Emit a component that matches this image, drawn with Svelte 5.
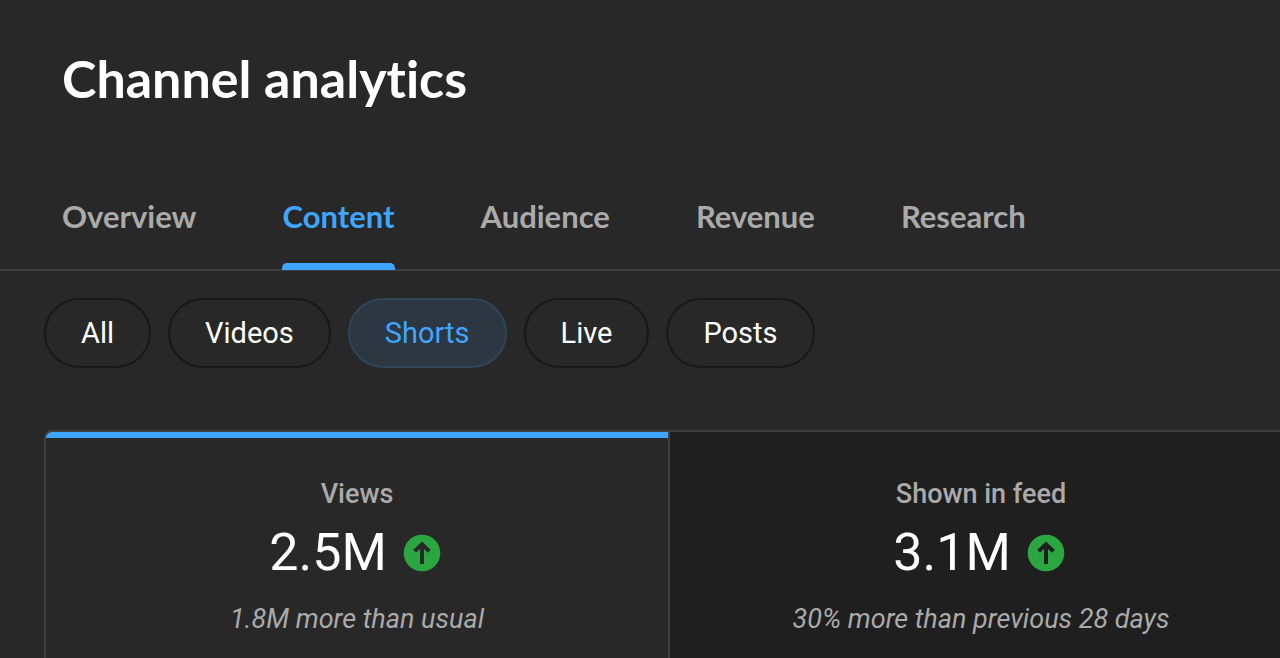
<script>
	const tabs = ['Overview', 'Content', 'Audience', 'Revenue', 'Research'];
	const filters = ['All', 'Videos', 'Shorts', 'Live', 'Posts'];
	const cards = [
		{ title: 'Views', value: '2.5M', note: '1.8M more than usual' },
		{ title: 'Shown in feed', value: '3.1M', note: '30% more than previous 28 days' }
	];

	let activeTab = 'Content';
	let activeFilter = 'Shorts';
	let activeCard = 'Views';
</script>

<main>
	<h1>Channel analytics</h1>

	<nav>
		{#each tabs as tab}
			<button class:active={tab === activeTab} on:click={() => { activeTab = tab; }}>{tab}</button>
		{/each}
	</nav>

	<div class="filters">
		{#each filters as filter}
			<button class:active={filter === activeFilter} on:click={() => { activeFilter = filter; }}>{filter}</button>
		{/each}
	</div>

	<div class="cards">
		{#each cards as card}
			<button class:active={card.title === activeCard} on:click={() => { activeCard = card.title; }}>
				<span class="title">{card.title}</span>
				<span class="value">
					<span>{card.value}</span>
					<svg viewBox="0 0 38 38" aria-hidden="true">
						<circle cx="19" cy="19" r="18.3" />
						<path d="M19 30V10.5M11.6 17.2l7.4-7 7.4 7" />
					</svg>
				</span>
				<span class="note">{card.note}</span>
			</button>
		{/each}
	</div>
</main>

<style>
	:global(body) {
		background: #282828;
	}
	main {
		min-height: 100vh;
		overflow: hidden;
		color: #fff;
		font-family: Roboto, sans-serif;
	}
	button {
		margin: 0;
		font-family: inherit;
		color: inherit;
		background: none;
		border: none;
		cursor: pointer;
	}
	h1 {
		margin: 46px 62px 0;
		font-family: Lato, sans-serif;
		font-size: 52px;
		line-height: 64px;
		font-weight: 700;
		font-variant-ligatures: none;
	}

	nav {
		display: flex;
		gap: 86px;
		margin-top: 56px;
		padding-left: 62px;
		border-bottom: 2px solid #3f3f3f;
	}
	nav button {
		position: relative;
		padding: 31px 0 33px;
		font-family: Lato, sans-serif;
		font-size: 31px;
		line-height: 39px;
		font-weight: 700;
		color: #aaa;
	}
	nav .active {
		color: #3ea6ff;
	}
	nav .active::after {
		content: '';
		position: absolute;
		left: 0;
		right: 0;
		bottom: -1px;
		height: 7px;
		background: #3ea6ff;
		border-radius: 5px 5px 0 0;
	}

	.filters {
		display: flex;
		gap: 17px;
		padding: 27px 44px 0;
	}
	.filters button {
		padding: 16px 35px;
		border: 2px solid #181818;
		border-radius: 35px;
		font-size: 29px;
		line-height: 34px;
	}
	.filters .active {
		color: #3ea6ff;
		background: #2d3741;
		border-color: #2f455a;
	}

	/* the row runs on past the right edge */
	.cards {
		display: flex;
		margin: 62px -12px 0 44px;
	}
	.cards button {
		position: relative;
		flex: 1 1 0;
		display: flex;
		flex-direction: column;
		align-items: center;
		padding: 46px 0 32px;
		overflow: hidden;
		background: #1f1f1f;
		border-top: 2px solid #3f3f3f;
	}
	.cards .active {
		background: #282828;
		border-left: 2px solid #3f3f3f;
		border-right: 2px solid #3f3f3f;
		border-radius: 8px 0 0 0;
	}
	.cards .active::before {
		content: '';
		position: absolute;
		top: 0;
		left: 0;
		right: 0;
		height: 6px;
		background: #3ea6ff;
	}
	.title {
		font-size: 27px;
		line-height: 32px;
		font-weight: 500;
		color: #aaa;
	}
	.value {
		display: flex;
		align-items: center;
		gap: 16px;
		margin: 11px 0 18px;
		padding-right: 4px;
		font-size: 52px;
		line-height: 64px;
	}
	.value svg {
		width: 38px;
		height: 38px;
	}
	circle {
		fill: #2ba640;
	}
	/* arrow reads as cut out of the circle */
	path {
		fill: none;
		stroke: #1f1f1f;
		stroke-width: 4;
	}
	.active path {
		stroke: #282828;
	}
	.note {
		font-size: 27px;
		line-height: 32px;
		font-style: italic;
		color: #aaa;
	}
</style>
